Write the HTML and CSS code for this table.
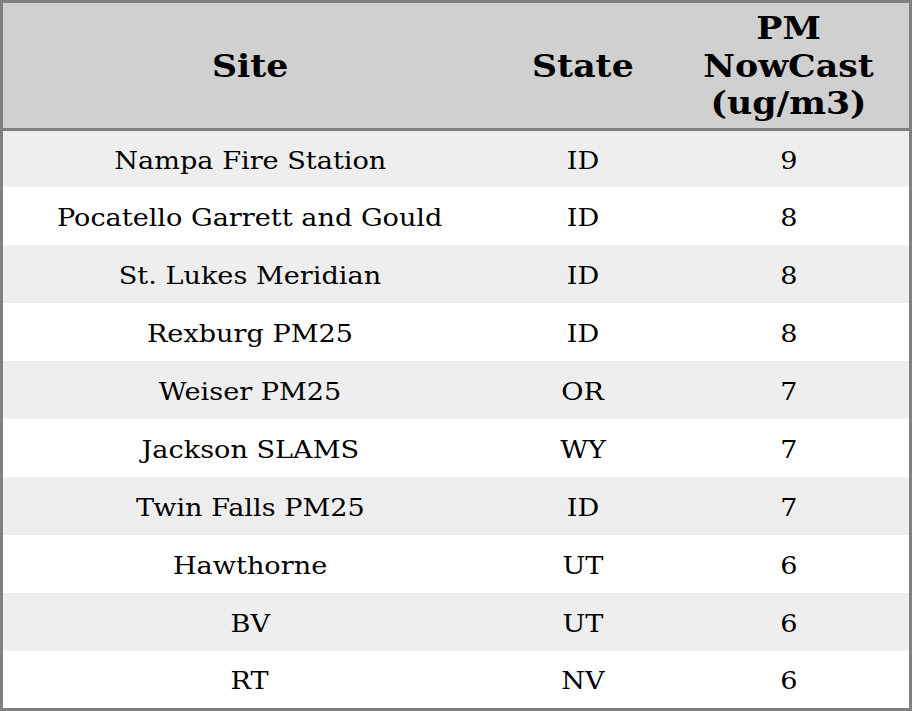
FILE: index.html
```html
<!DOCTYPE html>
<html>
<head>
<meta charset="utf-8">
<link rel="stylesheet" href="styles.css">
</head>
<body>
<table class="aq">
  <thead>
    <tr>
      <th class="c-site"><span class="tx">Site</span></th>
      <th class="c-state"><span class="tx">State</span></th>
      <th class="c-pm"><span class="tx">PM<br>NowCast<br>(ug/m3)</span></th>
    </tr>
  </thead>
  <tbody>
    <tr class="first"><td><span class="tx">Nampa Fire Station</span></td><td><span class="tx">ID</span></td><td><span class="tx">9</span></td></tr>
    <tr><td><span class="tx">Pocatello Garrett and Gould</span></td><td><span class="tx">ID</span></td><td><span class="tx">8</span></td></tr>
    <tr><td><span class="tx">St. Lukes Meridian</span></td><td><span class="tx">ID</span></td><td><span class="tx">8</span></td></tr>
    <tr><td><span class="tx">Rexburg PM25</span></td><td><span class="tx">ID</span></td><td><span class="tx">8</span></td></tr>
    <tr><td><span class="tx">Weiser PM25</span></td><td><span class="tx">OR</span></td><td><span class="tx">7</span></td></tr>
    <tr><td><span class="tx">Jackson SLAMS</span></td><td><span class="tx">WY</span></td><td><span class="tx">7</span></td></tr>
    <tr><td><span class="tx">Twin Falls PM25</span></td><td><span class="tx">ID</span></td><td><span class="tx">7</span></td></tr>
    <tr><td><span class="tx">Hawthorne</span></td><td><span class="tx">UT</span></td><td><span class="tx">6</span></td></tr>
    <tr><td><span class="tx">BV</span></td><td><span class="tx">UT</span></td><td><span class="tx">6</span></td></tr>
    <tr class="last"><td><span class="tx">RT</span></td><td><span class="tx">NV</span></td><td><span class="tx">6</span></td></tr>
  </tbody>
</table>
</body>
</html>
```
FILE: styles.css
```css
html, body {
  margin: 0;
  padding: 0;
  background: #ffffff;
}
.aq {
  width: 912px;
  height: 711px;
  border-collapse: collapse;
  border: 3px solid #808080;
  font-family: "DejaVu Serif", serif;
  color: #000;
  table-layout: fixed;
}
.tx {
  display: inline-block;
  transform: scaleX(1.085);
}
.aq th {
  background: #d0d0d0;
  font-size: 32px;
  font-weight: bold;
  line-height: 37.5px;
  height: 123px;
  padding: 2px 0 0 0;
  border-bottom: 3px solid #808080;
  text-align: center;
  vertical-align: middle;
}
.c-site { width: 494px; }
.c-state { width: 172px; }
.c-pm { width: 240px; }
.aq td {
  font-size: 25px;
  text-align: center;
  vertical-align: middle;
  padding: 2px 0 0 0;
  height: 56px;
}
.aq tbody tr.first td { height: 54px; }
.aq tbody tr.last td { height: 55px; }
.aq tbody tr:nth-child(odd) { background: #eeeeee; }
.aq tbody tr:nth-child(even) { background: #ffffff; }
```
